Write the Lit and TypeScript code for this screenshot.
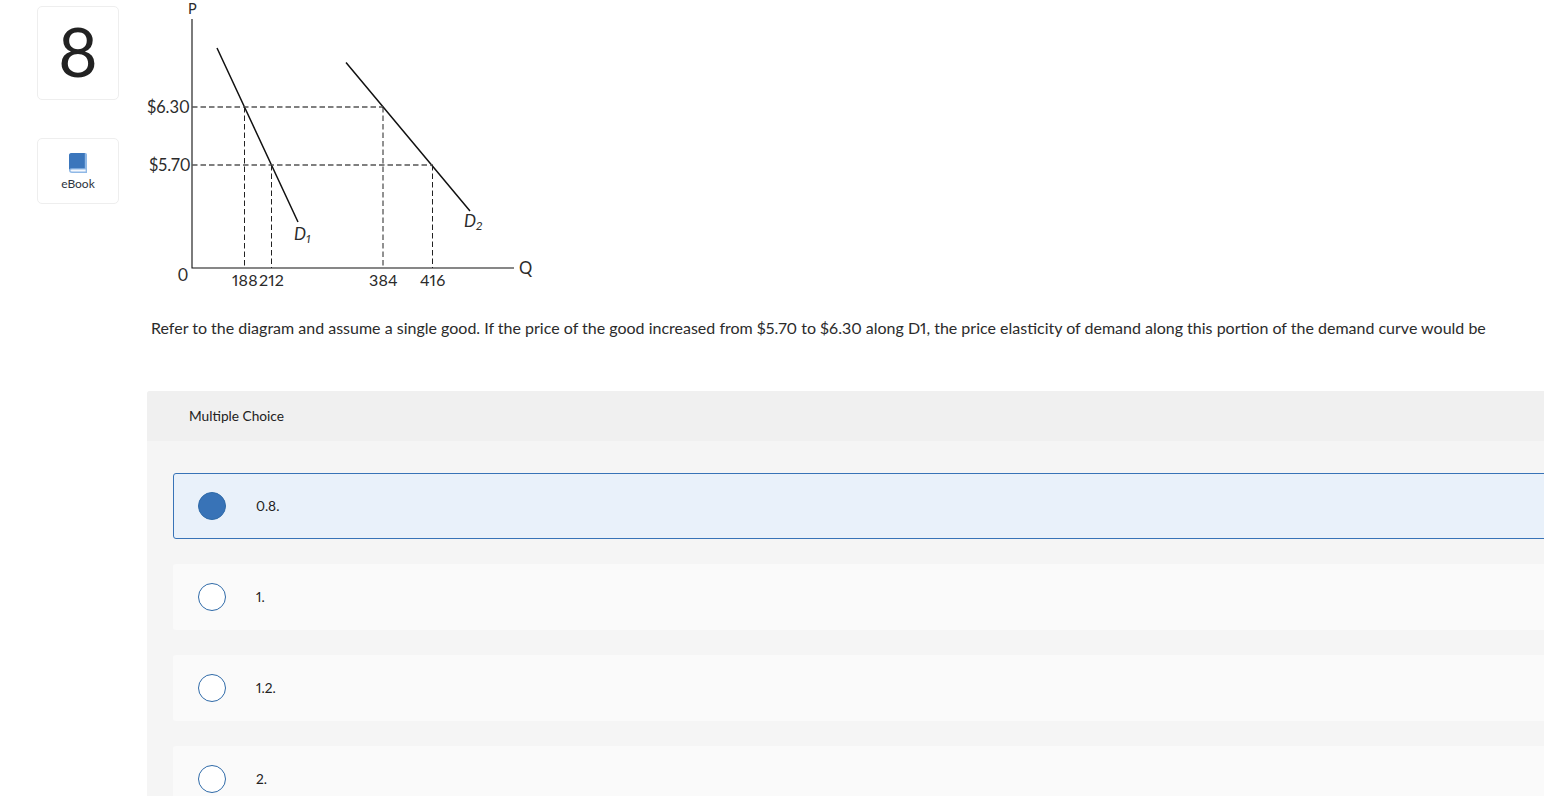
import { LitElement, html, css, svg } from 'lit';
import { customElement } from 'lit/decorators.js';

@customElement('app-root')
export class AppRoot extends LitElement {
    static styles = css`
        :host {
            display: flex;
            width: 1544px;
            height: 796px;
            overflow: hidden;
            background: #fff;
            color: #222;
            font-family: Lato, 'Liberation Sans', sans-serif;
            font-variant-numeric: proportional-nums;
        }

        .side {
            flex: none;
            width: 82px;
            margin: 6px 0 0 37px;
            display: flex;
            flex-direction: column;
            gap: 38px;
        }

        .card {
            box-sizing: border-box;
            border: 1px solid #eeeeee;
            border-radius: 5px;
            display: flex;
            flex-direction: column;
            align-items: center;
        }

        .num {
            height: 94px;
            padding-bottom: 4px;
            justify-content: center;
            font-size: 68px;
            font-weight: 400;
            line-height: 1;
            color: #222;
        }

        .ebook {
            height: 66px;
            padding-top: 14px;
            font-size: 12px;
            color: #2d3440;
        }

        .ebook svg {
            display: block;
            margin-bottom: 3px;
        }

        .main {
            flex: none;
            width: 1500px;
            margin-left: 28px;
        }

        .chart {
            display: block;
        }

        .chart text {
            font-family: Lato, sans-serif;
            font-size: 16.5px;
            fill: #2b2b2b;
        }

        .chart text.tick {
            font-size: 16px;
            letter-spacing: 0.2px;
        }

        .chart text.axis {
            font-size: 14.5px;
        }

        .chart text.curve {
            font-size: 17px;
            font-style: italic;
        }

        .chart tspan {
            font-size: 12px;
        }

        .question {
            margin: 28px 0 0 4px;
            font-size: 16px;
            line-height: 20px;
            color: #2b2b2b;
            white-space: nowrap;
        }

        .panel {
            margin-top: 53px;
            background: #f5f5f5;
            border-radius: 3px 0 0 0;
        }

        .panel-head {
            height: 50px;
            padding: 0 0 1px 42px;
            box-sizing: border-box;
            display: flex;
            align-items: center;
            background: #f0f0f0;
            font-size: 13.7px;
            border-radius: 3px 0 0 0;
        }

        .options {
            padding: 32px 0 0 26px;
            display: flex;
            flex-direction: column;
            gap: 25px;
        }

        .option {
            box-sizing: border-box;
            height: 66px;
            padding-left: 25px;
            display: flex;
            align-items: center;
            gap: 30px;
            background: #fafafa;
            border-radius: 3px;
            font-size: 13.7px;
        }

        .option.selected {
            background: #e9f1fa;
            border: 1px solid #3873b7;
            padding-left: 24px;
        }

        .option-text {
            padding-bottom: 2px;
        }

        .radio {
            flex: none;
            box-sizing: border-box;
            width: 28px;
            height: 28px;
            border-radius: 50%;
            border: 1.3px solid #2f6aa8;
            background: #fff;
        }

        .selected .radio {
            background: #3873b7;
        }
    `;

    private renderChart() {
        return html`
            <svg class="chart" width="400" height="290" viewBox="147 0 400 290">
                ${svg`
                    <path d="M192 19V268H514" stroke="#111" stroke-width="1.1" fill="none" />
                    <path d="M217 48L298 222M346 62.5L470 211" stroke="#111" stroke-width="1.5" fill="none" />
                    <path d="M192 107H383M192 165H433" stroke="#555" stroke-width="1.3" stroke-dasharray="5.5 3" fill="none" />
                    <path d="M244.5 107V268M271.5 165V268M383 107V268M432.5 165V268" stroke="#222" stroke-width="1" stroke-dasharray="5.5 3" fill="none" />
                    <text class="axis" x="188" y="14.4">P</text>
                    <text x="147" y="112.5">$6.30</text>
                    <text x="149" y="170.5">$5.70</text>
                    <text x="177.5" y="281">0</text>
                    <text class="tick" x="232" y="285.5">188</text>
                    <text class="tick" x="259" y="285.5">212</text>
                    <text class="tick" x="369" y="285.5">384</text>
                    <text class="tick" x="420" y="285.5">416</text>
                    <text x="519" y="273.5">Q</text>
                    <text class="curve" x="294" y="240">D<tspan dy="3">1</tspan></text>
                    <text class="curve" x="464" y="227">D<tspan dy="3">2</tspan></text>
                `}
            </svg>
        `;
    }

    render() {
        const options = ['0.8.', '1.', '1.2.', '2.'];
        return html`
            <div class="side">
                <div class="card num">8</div>
                <div class="card ebook">
                    <svg width="18" height="20" viewBox="0 0 18 20">
                        <path d="M2.5 0H16.5Q18 0 18 1.5V20H3Q0 20 0 17V2.5Q0 0 2.5 0Z" fill="#8fb8e6" />
                        <path d="M2.5 0H15.8V15.2H3Q1 15.2 0 16.4V2.5Q0 0 2.5 0Z" fill="#3b76bc" />
                        <path d="M3 16.4H16.6V18.4H3Q1.5 18.4 1.5 17.4T3 16.4Z" fill="#f5f8fd" />
                    </svg>
                    eBook
                </div>
            </div>
            <div class="main">
                ${this.renderChart()}
                <p class="question">Refer to the diagram and assume a single good. If the price of the good increased from $5.70 to $6.30 along D1, the price elasticity of demand along this portion of the demand curve would be</p>
                <div class="panel">
                    <div class="panel-head">Multiple Choice</div>
                    <div class="options">
                        ${options.map((o, i) => html`
                            <div class="option ${i === 0 ? 'selected' : ''}">
                                <span class="radio"></span>
                                <span class="option-text">${o}</span>
                            </div>
                        `)}
                    </div>
                </div>
            </div>
        `;
    }
}
